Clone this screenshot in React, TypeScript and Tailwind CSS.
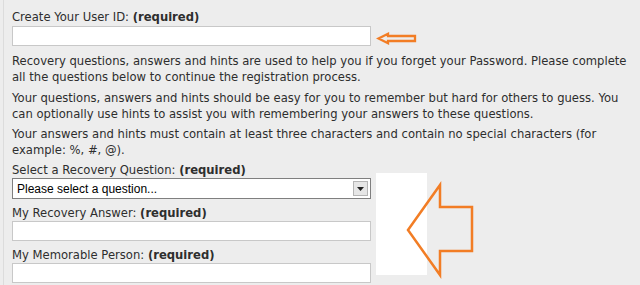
import React from "react";

function Label({ text }: { text: string }) {
  return (
    <div className="leading-[16px]">
      {text} <span className="font-bold">(required)</span>
    </div>
  );
}

function TextBox() {
  return <div className="h-[20px] w-[359px] border border-[#c8c8c8] bg-white" />;
}

export default function App() {
  return (
    <div className="relative h-[285px] w-[640px] overflow-hidden whitespace-nowrap bg-[#ededed] font-['DejaVu_Sans',Verdana,sans-serif] text-[11.6px] text-[#2e2e2e]">
      <div className="absolute left-[3px] top-0 h-full w-px bg-[#dcdcdc]" />
      <div className="pl-[12px] pt-[9px]">
        <Label text="Create Your User ID:" />
        <div className="mt-px">
          <TextBox />
        </div>

        <p className="mt-[7px] leading-[16px]">
          Recovery questions, answers and hints are used to help you if you forget your Password. Please complete
          <br />
          all the questions below to continue the registration process.
        </p>
        <p className="mt-[5px] leading-[16px]">
          Your questions, answers and hints should be easy for you to remember but hard for others to guess. You
          <br />
          can optionally use hints to assist you with remembering your answers to these questions.
        </p>
        <p className="mt-[4px] leading-[16px]">
          Your answers and hints must contain at least three characters and contain no special characters (for
          <br />
          example: %, #, @).
        </p>

        <div className="mt-[4px] flex items-start">
          <div className="w-[359px]">
            <Label text="Select a Recovery Question:" />
            <div className="flex h-[21px] items-center justify-between border border-[#7f7f7f] bg-white pl-[4px] pr-[2px] font-['Liberation_Sans',Arial,sans-serif] text-[12px] text-black">
              <span>Please select a question...</span>
              <span className="flex h-[15px] w-[15px] items-center justify-center border border-[#b5b5b5] bg-[#e6e6e6]">
                <svg width="7" height="4" viewBox="0 0 7 4">
                  <path d="M0 0h7L3.5 4z" fill="#222" />
                </svg>
              </span>
            </div>
            <div className="mt-[6px]">
              <Label text="My Recovery Answer:" />
            </div>
            <TextBox />
            <div className="mt-[6px]">
              <Label text="My Memorable Person:" />
            </div>
            <TextBox />
          </div>
          <div className="ml-[5px] mt-[11px] h-[102px] w-[51px] bg-white" />
        </div>
      </div>

      <svg className="absolute left-[376px] top-[32px]" width="42" height="13" viewBox="0 0 42 13">
        <path
          d="M2.5 6.5 L12 1.8 V4 H39 V9 H12 V11.2 Z"
          fill="none"
          stroke="#f27d25"
          strokeWidth="2.3"
          strokeLinejoin="miter"
        />
      </svg>

      <svg className="absolute left-[400px] top-[180px]" width="80" height="100" viewBox="0 0 80 100">
        <path
          d="M8 50 L40 5 V27 H72 V71 H40 V95 Z"
          fill="none"
          stroke="#f27d25"
          strokeWidth="2.5"
          strokeLinejoin="miter"
        />
      </svg>
    </div>
  );
}
